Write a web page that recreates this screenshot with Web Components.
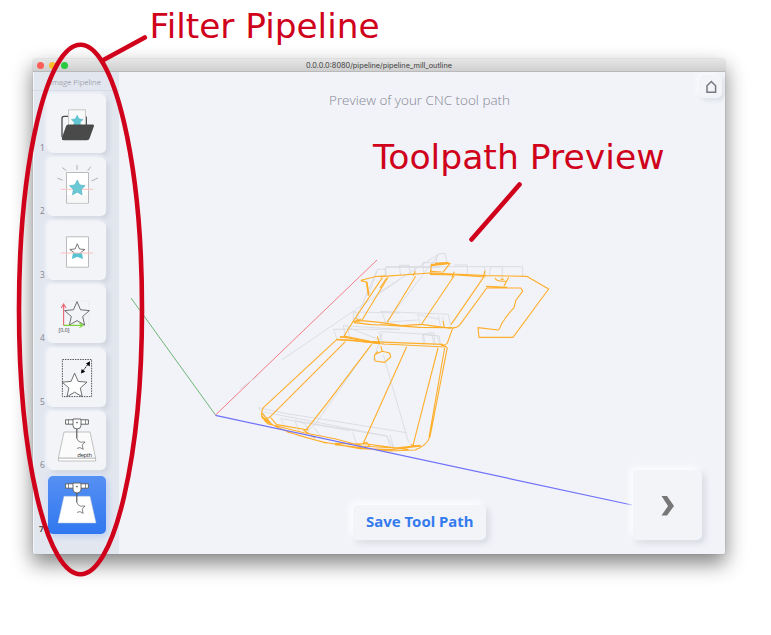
<!DOCTYPE html>
<html lang="en"><head><meta charset="utf-8"><title>Pipeline mill outline</title>
<style>
html,body{margin:0;background:#fff;width:771px;height:635px;overflow:hidden}
</style></head><body>
<pipeline-page></pipeline-page>
<script>
const define=(name,html,setup)=>customElements.define(name,class extends HTMLElement{
  connectedCallback(){
    if(this.shadowRoot)return;
    const t=document.createElement('template');t.innerHTML=html;
    this.attachShadow({mode:'open'}).append(t.content.cloneNode(true));
    if(setup)setup(this);
  }
});
const star=(cx,cy,r,inner=.45)=>{
  let p=[];
  for(let i=0;i<10;i++){const a=-Math.PI/2+i*Math.PI/5,q=i%2?r*inner:r;p.push((cx+q*Math.cos(a)).toFixed(2)+','+(cy+q*Math.sin(a)).toFixed(2));}
  return p.join(' ');
};
const mill=`<g stroke="#5a5a5a" stroke-width=".9" fill="#fff"><path d="M17.6 7.8H40.4V12.2H17.6Z"/><path d="M20.5 7.8V12.2M37.5 7.8V12.2" stroke-width=".7"/><path d="M25 7H33V13.5Q32.800 17 29 17Q25.200 17 25 13.500Z"/><path d="M28.8 17V26.600" fill="none" stroke-width="1.2"/></g><circle cx="29" cy="10.600" r=".8" fill="#4a4a4a"/><path d="M28.800 26.500Q30 29.500 32.600 30.200L37 30L34.200 33L35.200 37.300L32 35.600L29 36.400" fill="none" stroke="#555" stroke-width=".7"/>`;
const icons={
 open:`<path d="M14 42V23.500Q14 21.300 16 21.300H20.500M37.500 21.300Q38.300 21.500 38.300 23V30" fill="none" stroke="#4a4a4a" stroke-width="1.3"/><path d="M20.600 14.800H37.400V32H20.600Z" fill="#fafafa" stroke="#c6c6c6"/><polygon points="${star(29.2,26.4,6.3,.5)}" fill="#62c5d4" stroke="#4bb4c6" stroke-width=".4"/><path d="M20.200 29.400H44.800Q46.600 29.500 45.900 31.200L41.600 43.300Q41 45.200 39 45.200H15.600Q13.300 45 14 42.500L18.100 31Q18.700 29.500 20.200 29.400Z" fill="#4a4a4a"/>`,
 photo:`<path d="M18.500 14.500H40.500V45.200H18.500Z" fill="#fff" stroke="#bbb" stroke-width="1"/><path d="M19 37H40V44.500H19Z" fill="#f7f7f7"/><path d="M9.300 20L14.800 22.300M14.200 9.500L18.400 12.700M29 7V12M42.800 8.500L39.800 12.800M50 20L43.400 23" stroke="#aaa" stroke-width=".9"/><path d="M12.700 31.300H45.300" stroke="#ffc0c0"/><polygon points="${star(29.3,30.2,8.2,.5)}" fill="#6bc9d6" stroke="#43acbd" stroke-width=".6"/>`,
 trace:`<path d="M18.500 14.800H40.500V45.200H18.500Z" fill="#fff" stroke="#bbb" stroke-width="1"/><path d="M25 31H34L35 37L29.300 34.700L23.800 37Z" fill="#57c4d3"/><path d="M26.500 31L21.800 27.500L27.100 27L29.300 21.800L31.500 27L36.800 27.500L32.200 31" fill="none" stroke="#555" stroke-width=".8"/><path d="M12.700 31H45.300" stroke="#ffc0c0"/>`,
 origin:`<path d="M16 16H41V41H16Z" fill="none" stroke="#ddd" stroke-width=".6" stroke-dasharray="1 1"/><polygon points="${star(29,29.6,13,.46)}" fill="none" stroke="#4d4d4d" stroke-width=".8"/><path d="M15.600 40.600V19.500M13.200 23L15.600 19L18 23" fill="none" stroke="#e96673" stroke-width="1.1"/><path d="M15.600 40.400H35M31.400 38L35 40.400L31.400 42.600" fill="none" stroke="#7fd43b" stroke-width="1.1"/><text x="10.400" y="47" font-family="Open Sans,sans-serif" font-size="5.200" fill="#333" textLength="11">[0,0]</text>`,
 scale:`<path d="M14.400 10.500H43.600V47.600H14.400Z" fill="none" stroke="#444" stroke-width=".9" stroke-dasharray="1.5 1"/><polygon points="${star(26.6,37.2,13,.46)}" fill="#fff" stroke="#4d4d4d" stroke-width=".8"/><path d="M34.500 22.500L40.700 14.300" stroke="#000" stroke-dasharray="1.5 .8"/><path d="M33 24.600L33.600 19.900L37.200 22.700ZM42 12.200L38 14.600L41.700 17.400Z" fill="#000"/>`,
 depth:`<path d="M10.400 46H47.600V49H10.400Z" fill="#fff" stroke="#aaa" stroke-width=".7"/><path d="M16 20H42L47.600 46H10.400Z" fill="#fbfbfb" stroke="#aaa" stroke-width=".7"/>${mill}<text x="29.300" y="44.700" font-family="Open Sans,sans-serif" font-size="6" fill="#333" textLength="15">depth</text>`,
 mill:`<path d="M16 20.300H42L48 47H10Z" fill="#fff" stroke="#b9c6df" stroke-width=".5"/>${mill}`
};

define('fit-text',`<style>:host{display:block}svg{display:block;overflow:visible;width:100%;height:100%}</style><svg><text x="0"></text></svg>`,el=>{
  const t=el.shadowRoot.querySelector('text');
  t.textContent=el.getAttribute('text');
  t.setAttribute('y',el.getAttribute('baseline'));
  t.setAttribute('textLength',el.getAttribute('length'));
  t.setAttribute('lengthAdjust',el.getAttribute('adjust')||'spacingAndGlyphs');
  t.style.fill='currentColor';
});

define('pipeline-step',`<style>
:host{display:flex;height:58px;width:73px;align-items:flex-end}
span{width:15px;box-sizing:border-box;padding-left:7px;font:8.5px/11px 'Open Sans',sans-serif;color:#80808b}
.tile{width:58px;height:58px;border-radius:5px;background:#f2f4f8;box-shadow:-2px -2px 4px #f6f8fc,3px 3px 5px #cfd4de}
svg{display:block}
:host([active]) .tile{background:linear-gradient(#5590f3,#3177ef);box-shadow:-1px -1px 3px #d8e5ff,2px 2px 6px #b9cdf2}
:host([active]) span{color:#555;font-weight:bold;padding-left:6px}
</style><span></span><div class="tile"></div>`,el=>{
  el.shadowRoot.querySelector('span').textContent=el.getAttribute('number');
  el.shadowRoot.querySelector('.tile').innerHTML=`<svg width="58" height="58" viewBox="0 0 58 58">${icons[el.getAttribute('icon')]}</svg>`;
});

define('pipeline-sidebar',`<style>
:host{display:flex;flex-direction:column;width:86px;background:#e2e6ef;box-shadow:inset 1px 0 #f4f6fa}
header{height:19px;border-bottom:1px solid #d5dae4;box-sizing:border-box;padding-left:16.5px}
fit-text{font:300 8px 'Open Sans',sans-serif;color:#838391;height:18px}
.steps{display:flex;flex-direction:column;gap:5.5px;padding-top:3.5px}
</style><header><fit-text text="Image Pipeline" length="51" baseline="12.700"></fit-text></header>
<div class="steps">${['open','photo','trace','origin','scale','depth','mill'].map((n,i)=>`<pipeline-step number="${i+1}" icon="${n}"${i==6?' active':''}></pipeline-step>`).join('')}</div>`);

define('title-bar',`<style>
:host{display:flex;height:13px;box-sizing:border-box;align-items:center;background:linear-gradient(#e6e6e6 0,#e0e0e0 25%,#cfcfcf);border-bottom:1px solid #b9b9b9;border-radius:3px 3px 0 0;padding-left:4.3px}
i{width:7px;height:7px;border-radius:50%;margin-right:4.7px}
fit-text{font:7.3px Inter,'Liberation Sans',sans-serif;color:#3e3e3e;height:12px;width:146px;margin-left:233.6px}
</style><i style="background:#ff5f57"></i><i style="background:#ffbd2e"></i><i style="background:#28c940"></i><fit-text text="0.0.0.0:8080/pipeline/pipeline_mill_outline" length="146" baseline="9"></fit-text>`);

define('soft-button',`<style>
:host{display:flex;align-items:center;justify-content:center;background:#f2f4f8;border-radius:5px;box-shadow:-3px -3px 6px #fdfeff,3px 3px 6px #d5d8df}
</style><slot></slot>`);

define('tool-path',`<style>:host{display:block;overflow:hidden}svg{display:block}</style>
<svg width="606" height="482" viewBox="119 72 606 482" fill="none" stroke-linejoin="round">
<g stroke-width="1"><path d="M215.500 415L131 298" stroke="#6fb577"/><path d="M215.500 415L377 260" stroke="#f47d82"/></g>
<g stroke="#d9dbe0" stroke-width="2.700">
 <g transform="translate(240 240) scale(.33333)"><path d="M125 360L480 118M385 167L413 88H438M345 245L410 92M436 110V82H600M340 240V216L480 219M342 214L363 239M436 246L427 219M291 298L281 268H480M316 290L310 257L480 268M330 297L323 262L420 300M400 360L427 280L412 300"/></g>
 <g transform="translate(380 240) scale(.33333)"><path d="M0 156L178 41M20 245L178 41H196L200 67M168 69L172 43M18 108V80H428V109M62 107L58 76H88L91 103M105 102V80M132 99L128 68H200M222 75H262V103M313 80L318 110M328 108L332 80H367V116M0 214L205 223L213 263M113 223L120 252M115 224L175 237M175 228L182 261M188 230L193 262M0 275L130 282L178 288M130 282L135 311M160 276L166 311M178 288L181 316M0 248L112 240"/></g>
 <g transform="translate(240 320) scale(.33333)"><path d="M0 206L55 167M430 105L505 365L516 375M385 85L225 314L195 335M55 263L135 280L500 338M55 263L92 307M66 275L440 348M122 296L210 310L440 348L465 390M122 296L137 325M165 303L178 335M165 303L330 332M170 303L195 311L210 345M222 322L250 360M338 338L350 370M450 345L462 385M440 346L452 384M550 72L548 44L590 47L600 72M575 37L582 75M548 44L575 37M433 76L415 34"/></g>
</g>
<g stroke="#ffae2a" stroke-width="3.300">
 <g transform="translate(240 240) scale(.33333)"><path d="M436 108L405 110L363 121L379 127L385 168M363 123L381 126L387 164M427 113L342 240L310 292M444 112L365 242M342 245L365 242L420 247M342 248L395 254L420 255M348 235L361 244M290 299L345 301L420 311M300 293L316 289L390 304L420 307M340 245L363 238M412 289L418 310"/></g>
 <g transform="translate(380 240) scale(.33333)"><path d="M0 110L150 99L222 102L318 107L440 109L506 147L399 292H297L294 263L355 270Q360 266 364 253Q380 226 402 203L408 180L428 154L423 144H320L240 254Q230 266 212 263L120 262L0 254M150 103L230 105L316 111M345 114Q350 126 380 123M362 116Q367 122 371 116M386 112L372 138M318 139L382 142M20 114L0 144M107 109L22 247M222 108L125 252M310 113L213 254M0 247L65 257L125 253L212 265M152 98L154 73L210 70L188 98M152 77L200 72M165 70L205 68M150 94L185 96M218 265L202 309Q193 320 183 315M100 107L106 94M216 112L223 95M310 111L315 92M193 262L189 243"/></g>
 <g transform="translate(240 320) scale(.33333)"><path d="M290 59L70 263Q61 279 67 294L95 314M316 65L91 290L72 300M395 73L265 245L195 334M500 80L370 370M594 84L519 376M622 83L570 350Q560 378 525 390L450 393L380 385L285 374M614 84L567 352M290 58L345 63L430 72L618 81M300 50L390 65L608 73L622 83M413 94L403 107L405 123L434 127L452 111L449 99L427 94L408 102M427 94L422 78M67 280L95 313Q145 342 250 366L360 386L455 389L542 378M64 287L91 311M72 300L85 312L195 339L285 356L365 378L465 384L542 376M140 335L260 370M285 370L380 372L505 389M92 293L110 314L205 330M190 330L225 354M355 375L380 367L390 380M512 374L545 381M66 292L82 308"/></g>
</g>
<path d="M215.500 415.300L632 505" stroke="#7070fa" stroke-width="1.200"/>
</svg>`);

define('preview-pane',`<style>
:host{display:grid;width:606px;height:482px;background:#f1f3f8;grid-template-columns:1fr;grid-template-rows:40px 1fr 70px 14px;overflow:hidden}
tool-path{grid-area:1/1/5/2}
.top{grid-area:1/1;display:flex;justify-content:space-between;padding:3px 3px 0 209.5px;align-items:flex-start}
.top fit-text{width:181px;height:30px;font:300 13.600px 'Open Sans',sans-serif;color:#858594}
.top soft-button{width:23px;height:23px;box-shadow:-2px -2px 5px #fbfcff,2px 2px 4px #d8dbe3}
.foot{grid-area:3/1;display:flex;gap:147px;padding-left:234px;align-items:center}
.save{width:133px;height:35px;margin-top:34px}
.save fit-text{width:108px;height:35px;font:700 13.500px 'Noto Sans','Open Sans',sans-serif;color:#347bee}
.next{width:69px;height:70px}
</style>
<tool-path></tool-path>
<div class="top"><fit-text text="Preview of your CNC tool path" length="181" baseline="30"></fit-text><soft-button><svg width="15" height="15" viewBox="0 0 15 15"><path d="M4 13.300V6.800L8.300 2.500L12.600 6.800V13.300Z" fill="none" stroke="#777783" stroke-width="1.500"/></svg></soft-button></div>
<div class="foot"><soft-button class="save"><fit-text text="Save Tool Path" length="107.500" baseline="22.300"></fit-text></soft-button><soft-button class="next"><svg width="14" height="22" viewBox="0 0 14 22"><path d="M0.500 2H6L13 12L6 21.500H0.500L7 12Z" fill="#777"/></svg></soft-button></div>`);

define('browser-window',`<style>
:host{display:flex;flex-direction:column;width:692px;height:495px;border-radius:3px;box-shadow:0 0 1px #0006,0 9px 20px 1px #00000078;overflow:clip}
.body{display:flex;flex:1;background:#f1f3f8}
</style><title-bar></title-bar><div class="body"><pipeline-sidebar></pipeline-sidebar><preview-pane></preview-pane></div>`);

define('annotation-layer',`<style>:host{position:absolute;inset:0;display:block}svg{display:block}</style>
<svg width="771" height="635" fill="none" stroke="#d0021b" stroke-width="4.600" stroke-linecap="round">
<ellipse cx="80.500" cy="309.500" rx="61.500" ry="264.800"/><path d="M102.500 60.500L144.800 37.500M519.500 184.500L471.500 239.500"/>
<g fill="#d0021b" stroke="none" font-family="DejaVu Sans, sans-serif" font-size="34"><text x="149.500" y="37.800" textLength="230" lengthAdjust="spacingAndGlyphs">Filter Pipeline</text><text x="373" y="169" textLength="291.500" lengthAdjust="spacingAndGlyphs">Toolpath Preview</text></g>
</svg>`);

define('pipeline-page',`<style>:host{display:block;position:relative;width:771px;height:635px;box-sizing:border-box;padding:59px 0 0 33px;overflow:hidden;background:#fff}</style>
<browser-window></browser-window><annotation-layer></annotation-layer>`);
</script></body></html>
